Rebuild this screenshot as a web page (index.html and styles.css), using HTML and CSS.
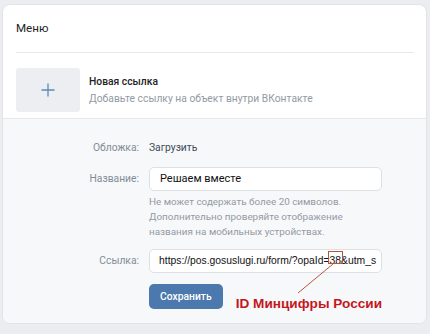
FILE: index.html
```html
<!DOCTYPE html>
<html lang="ru">
<head>
    <meta charset="UTF-8">
    <title>Меню</title>
    <link rel="stylesheet" href="styles.css">
</head>
<body>

    <div class="card">
        <div class="card-head">Меню</div>
        <div class="divider"></div>

        <div class="new-link">
            <div class="tile">
                <svg width="16" height="16" viewBox="0 0 16 16">
                    <path d="M8 1.5v13M1.5 8h13" stroke="#5b88bd" stroke-width="1.3" fill="none"/>
                </svg>
            </div>
            <div class="new-link-text">
                <div class="new-link-title">Новая ссылка</div>
                <div class="new-link-sub">Добавьте ссылку на объект внутри ВКонтакте</div>
            </div>
        </div>

        <div class="form">
            <div class="label">Обложка:</div>
            <div class="value"><span class="upload">Загрузить</span></div>

            <div class="label label-input">Название:</div>
            <div class="value">
                <div class="field">Решаем вместе</div>
                <div class="hint">Не может содержать более 20 символов.<br>Дополнительно проверяйте отображение<br>названия на мобильных устройствах.</div>
            </div>

            <div class="label label-input">Ссылка:</div>
            <div class="value">
                <div class="field field-url">https://pos.gosuslugi.ru/form/?opaId=38&amp;utm_s</div>
            </div>

            <div class="label"></div>
            <div class="value actions">
                <button class="save">Сохранить</button>
                <span class="note">ID Минцифры России</span>
            </div>
        </div>

        <svg class="mark" width="430" height="334" viewBox="0 0 430 334">
            <rect x="328.5" y="251.5" width="14" height="12" fill="none" stroke="#b5553f" stroke-width="1"/>
            <line x1="333" y1="264" x2="298" y2="293" stroke="#b5553f" stroke-width="1"/>
        </svg>
    </div>

</body>
</html>
```

FILE: styles.css
```css
body {
    margin: 0;
    padding: 4px 3px 5px 2px;
    background: #ebedf0;
    font-family: Roboto, "Liberation Sans", Arial, sans-serif;
    font-size: 10.3px;
    color: #000;
}

.card {
    background: #fff;
    border: 1px solid #e1e3e6;
    border-radius: 8px;
    overflow: hidden;
}

.card-head {
    height: 47px;
    line-height: 47px;
    padding: 0 13px;
    font-size: 11.6px;
    color: #222;
}

.divider {
    height: 1px;
    margin: 0 12px 0 13px;
    background: #e7e8ec;
}

.new-link {
    display: flex;
    align-items: center;
    padding: 15px 13px 6px;
}

.tile {
    width: 64px;
    height: 44px;
    background: #eceef1;
    border-radius: 3px;
    display: flex;
    align-items: center;
    justify-content: center;
}

.new-link-text { margin-left: 9px; }

.new-link-title {
    font-weight: 500;
    color: #222;
    line-height: 17px;
}

.new-link-sub {
    color: #939aa3;
    line-height: 17px;
}

.form {
    display: grid;
    grid-template-columns: 136px 233px;
    column-gap: 10px;
    row-gap: 11px;
    align-items: start;
    background: #f7f8fa;
    border-top: 1px solid #e7e8ec;
    padding: 21px 0 14px;
}

.label {
    text-align: right;
    color: #818c99;
    line-height: 16px;
}

.label-input { line-height: 24px; }

.upload { color: #3d4a58; line-height: 16px; }

.field {
    height: 22px;
    line-height: 22px;
    background: #fff;
    border: 1px solid #dce1e6;
    border-radius: 5px;
    padding: 0 10px;
    font-size: 11px;
    color: #111;
    white-space: nowrap;
    overflow: hidden;
}

.field-url {
    font-family: "Liberation Sans", Arial, sans-serif;
    font-size: 10.35px;
    padding: 0 9px;
}

.hint {
    color: #939aa3;
    font-size: 9.9px;
    line-height: 15px;
    margin-top: 3px;
    margin-bottom: -1px;
}

.actions {
    display: flex;
    align-items: flex-end;
}

.save {
    width: 75px;
    height: 25px;
    background: #4b78ad;
    color: #fff;
    border: none;
    border-radius: 5px;
    font-family: Roboto, Arial, sans-serif;
    font-size: 10.3px;
    font-weight: 500;
    padding: 0;
}

.note {
    margin-left: 13px;
    color: #c4161c;
    font-family: "Liberation Sans", Arial, sans-serif;
    font-weight: bold;
    font-size: 13.6px;
    line-height: 16px;
    white-space: nowrap;
    margin-bottom: -3px;
}

.mark {
    position: absolute;
    left: 0;
    top: 0;
    pointer-events: none;
}
```
